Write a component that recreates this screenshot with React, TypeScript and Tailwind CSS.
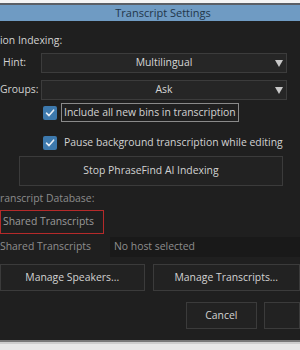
import React from "react";

function Check() {
  return (
    <div className="w-[14px] h-[14px] rounded-[2px] bg-[#3d79ad] flex items-center justify-center shrink-0">
      <svg width="10" height="10" viewBox="0 0 10 10">
        <path d="M1.5 5.2 L4 7.6 L8.6 2.2" stroke="#e8eef5" strokeWidth="1.6" fill="none" strokeLinecap="round" strokeLinejoin="round" />
      </svg>
    </div>
  );
}

function Select({ value }: { value: string }) {
  return (
    <div className="relative ml-[41px] w-[246px] h-[20px] bg-[#262626] border border-[#3c3c3c] flex items-center justify-center text-[#d6d6d6]">
      <span>{value}</span>
      <svg className="absolute right-[3px] top-[6px]" width="8" height="7" viewBox="0 0 8 7">
        <path d="M0 0 L8 0 L4 7 Z" fill="#c8c8c8" />
      </svg>
    </div>
  );
}

export default function App() {
  return (
    <div
      className="w-[300px] h-[350px] bg-[#e9e9e9] overflow-hidden text-[10.4px] text-[#d2d2d2]"
      style={{ fontFamily: '"Open Sans", "Liberation Sans", sans-serif' }}
    >
      <div className="h-[3px] bg-[#f4f4f4]" />
      <div className="h-[2px] bg-[#5a5f66]" />
      <div className="h-[16px] bg-[#6f9bc3] flex items-center justify-center pl-[26px] text-[11px] text-[#22364a]">
        Transcript Settings
      </div>
      <div className="h-[319px] bg-[#1f1f1f] flex flex-col">
        <div className="h-[12px]" />
        <div className="h-[15px] flex items-center">ion Indexing:</div>
        <div className="h-[5px]" />
        <div className="relative h-[20px] flex items-center">
          <span className="absolute left-[3px] top-[2px]">Hint:</span>
          <Select value="Multilingual" />
        </div>
        <div className="h-[7px]" />
        <div className="relative h-[20px] flex items-center">
          <span className="absolute left-0 top-[2px]">Groups:</span>
          <Select value="Ask" />
        </div>
        <div className="h-[3px]" />
        <div className="h-[19px] flex items-center pl-[43px] gap-[4px]">
          <Check />
          <div className="h-[19px] border border-[#8a8a8a] px-[2px] flex items-center">
            Include all new bins in transcription
          </div>
        </div>
        <div className="h-[14px]" />
        <div className="h-[14px] flex items-center pl-[43px] gap-[7px]">
          <Check />
          <span>Pause background transcription while editing</span>
        </div>
        <div className="h-[6px]" />
        <div className="ml-[19px] w-[264px] h-[30px] border border-[#3b3b3b] bg-[#222222] flex items-center justify-center">
          Stop PhraseFind AI Indexing
        </div>
        <div className="h-[5px]" />
        <div className="h-[15px] flex items-center text-[#8c8c8c]">ranscript Database:</div>
        <div className="h-[4px]" />
        <div className="w-[104px] h-[24px] border border-[#b52a2a] flex items-center pl-[2px] text-[#9a9a9a]">
          Shared Transcripts
        </div>
        <div className="h-[3px]" />
        <div className="h-[20px] flex items-center">
          <span className="w-[110px] text-[#8e8e8e]">Shared Transcripts</span>
          <div className="flex-1 h-[20px] bg-[#191919] flex items-center pl-[4px] text-[#8e8e8e]">
            No host selected
          </div>
        </div>
        <div className="h-[7px]" />
        <div className="flex h-[27px] gap-[8px]">
          <div className="w-[147px] border border-[#3b3b3b] bg-[#222222] flex items-center justify-center">
            Manage Speakers...
          </div>
          <div className="w-[150px] border border-[#3b3b3b] bg-[#222222] flex items-center justify-center">
            Manage Transcripts...
          </div>
        </div>
        <div className="h-[11px]" />
        <div className="flex h-[27px] gap-[7px] pl-[186px]">
          <div className="w-[78px] border border-[#3b3b3b] bg-[#222222] flex items-center justify-center">
            Cancel
          </div>
          <div className="w-[40px] border border-[#3b3b3b] bg-[#222222]" />
        </div>
      </div>
      <div className="h-[2px] bg-[#7a7a7a]" />
      <div className="h-[2px] bg-[#cfcfcf]" />
    </div>
  );
}
